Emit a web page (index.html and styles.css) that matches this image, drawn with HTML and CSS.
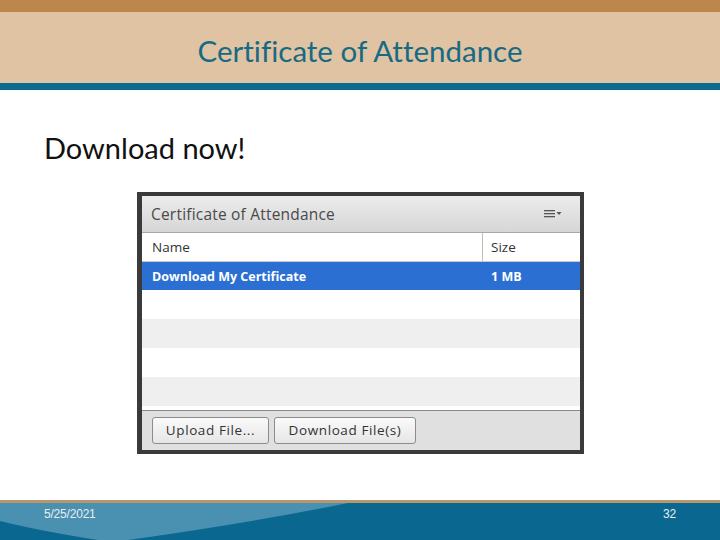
FILE: index.html
```html
<!DOCTYPE html>
<html>
<head>
<meta charset="utf-8">
<link rel="stylesheet" href="styles.css">
</head>
<body>
<div class="slide">
  <div class="topbar"></div>
  <div class="titlebar"><h1 class="title">Certificate of Attendance</h1></div>
  <div class="blueband"></div>
  <main class="content">
    <h2 class="lead">Download now!</h2>
    <section class="pod">
      <div class="pod-head">
        <span class="pod-title">Certificate of Attendance</span>
        <svg class="menu-icon" width="20" height="10" viewBox="0 0 20 10">
          <rect x="0" y="1" width="11" height="1.3" fill="#555"/>
          <rect x="0" y="4" width="11" height="1.3" fill="#555"/>
          <rect x="0" y="7" width="11" height="1.3" fill="#555"/>
          <polygon points="12.5,3 17.5,3 15,6" fill="#555"/>
        </svg>
      </div>
      <div class="grid-head">
        <div class="col-name">Name</div>
        <div class="col-size">Size</div>
      </div>
      <div class="row selected">
        <div class="col-name">Download My Certificate</div>
        <div class="col-size">1 MB</div>
      </div>
      <div class="row"></div>
      <div class="row alt"></div>
      <div class="row"></div>
      <div class="row alt"></div>
      <div class="filler"></div>
      <div class="pod-foot">
        <button class="btn btn-upload">Upload File...</button>
        <button class="btn btn-download">Download File(s)</button>
      </div>
    </section>
  </main>
  <footer class="footer">
    <svg class="footer-shape" width="720" height="37" viewBox="0 0 720 37" preserveAspectRatio="none">
      <path d="M0,0 L348,0 Q250,20 128,37 L98,37 Q40,28 0,18 Z" fill="#4a90b0"/>
    </svg>
    <span class="foot-text">5/25/2021</span>
    <span class="foot-text">32</span>
  </footer>
</div>
</body>
</html>
```

FILE: styles.css
```css
html, body {
  margin: 0;
  padding: 0;
}
body {
  width: 720px;
  height: 540px;
  overflow: hidden;
  background: #ffffff;
  font-family: "Lato", "Open Sans", sans-serif;
  font-variant-ligatures: none;
}
.slide {
  width: 720px;
  height: 540px;
  display: flex;
  flex-direction: column;
}
.topbar {
  height: 12px;
  background: #bd864d;
}
.titlebar {
  height: 71px;
  background: #dfc3a3;
  display: flex;
  align-items: center;
  justify-content: center;
}
.title {
  margin: 0;
  padding-top: 6px;
  font-family: "Lato", sans-serif;
  font-weight: 400;
  font-size: 29.5px;
  color: #176a84;
}
.blueband {
  height: 7px;
  background: #0d6a8f;
}
.content {
  flex: 1;
  display: flex;
  flex-direction: column;
  padding: 42px 0 0 0;
}
.lead {
  margin: 0 0 0 44px;
  font-family: "Lato", sans-serif;
  font-weight: 400;
  font-size: 29px;
  line-height: 32px;
  color: #111;
}
.pod {
  margin: 28px 0 0 137px;
  width: 438px;
  border: 4px solid #3a3a3a;
  border-left-width: 5px;
  border-right-width: 4px;
  display: flex;
  flex-direction: column;
  font-family: "Open Sans", sans-serif;
  font-size: 13.5px;
  background: #fff;
}
.pod-head {
  height: 36px;
  border-bottom: 1px solid #a8a8a8;
  background: linear-gradient(#ececec, #d6d6d6);
  display: flex;
  align-items: center;
  justify-content: space-between;
  padding: 0 16px 0 9px;
}
.pod-title {
  color: #4a4a4a;
  font-size: 15.5px;
  letter-spacing: 0.2px;
}
.menu-icon {
  display: block;
}
.grid-head, .row {
  display: flex;
  height: 28px;
  align-items: center;
}
.grid-head {
  border-bottom: 1px solid #c9c9c9;
  color: #333;
}
.col-name {
  width: 341px;
  padding-left: 10px;
  box-sizing: border-box;
  height: 100%;
  display: flex;
  align-items: center;
}
.grid-head .col-name {
  border-right: 1px solid #bdbdbd;
}
.col-size {
  padding-left: 8px;
}
.row {
  height: 29px;
}
.row.selected {
  height: 28px;
  background: #2b6fd2;
  color: #fff;
  font-weight: 700;
  font-size: 12.5px;
}
.row.alt {
  background: #efefef;
}
.filler {
  height: 4px;
}
.pod-foot {
  height: 38px;
  border-top: 1px solid #8a8a8a;
  background: #e0e0e0;
  display: flex;
  align-items: center;
  gap: 5px;
  padding: 0 0 1px 10px;
}
.btn {
  height: 27px;
  border: 1px solid #8c8c8c;
  border-radius: 3px;
  background: linear-gradient(#fafafa, #e6e6e6);
  font-family: "Open Sans", sans-serif;
  font-size: 13.5px;
  letter-spacing: 0.6px;
  color: #333;
  padding: 0;
}
.btn-upload {
  width: 117px;
}
.btn-download {
  width: 142px;
}
.footer {
  position: relative;
  height: 37px;
  border-top: 3px solid #b8966e;
  background: #0a6790;
  display: flex;
  justify-content: space-between;
  align-items: flex-start;
  padding: 0 44px;
}
.footer-shape {
  position: absolute;
  left: 0;
  top: 0;
}
.foot-text {
  position: relative;
  margin-top: 4px;
  font-family: "Liberation Sans", sans-serif;
  font-size: 12px;
  color: #e6eef2;
  letter-spacing: -0.2px;
}
```
